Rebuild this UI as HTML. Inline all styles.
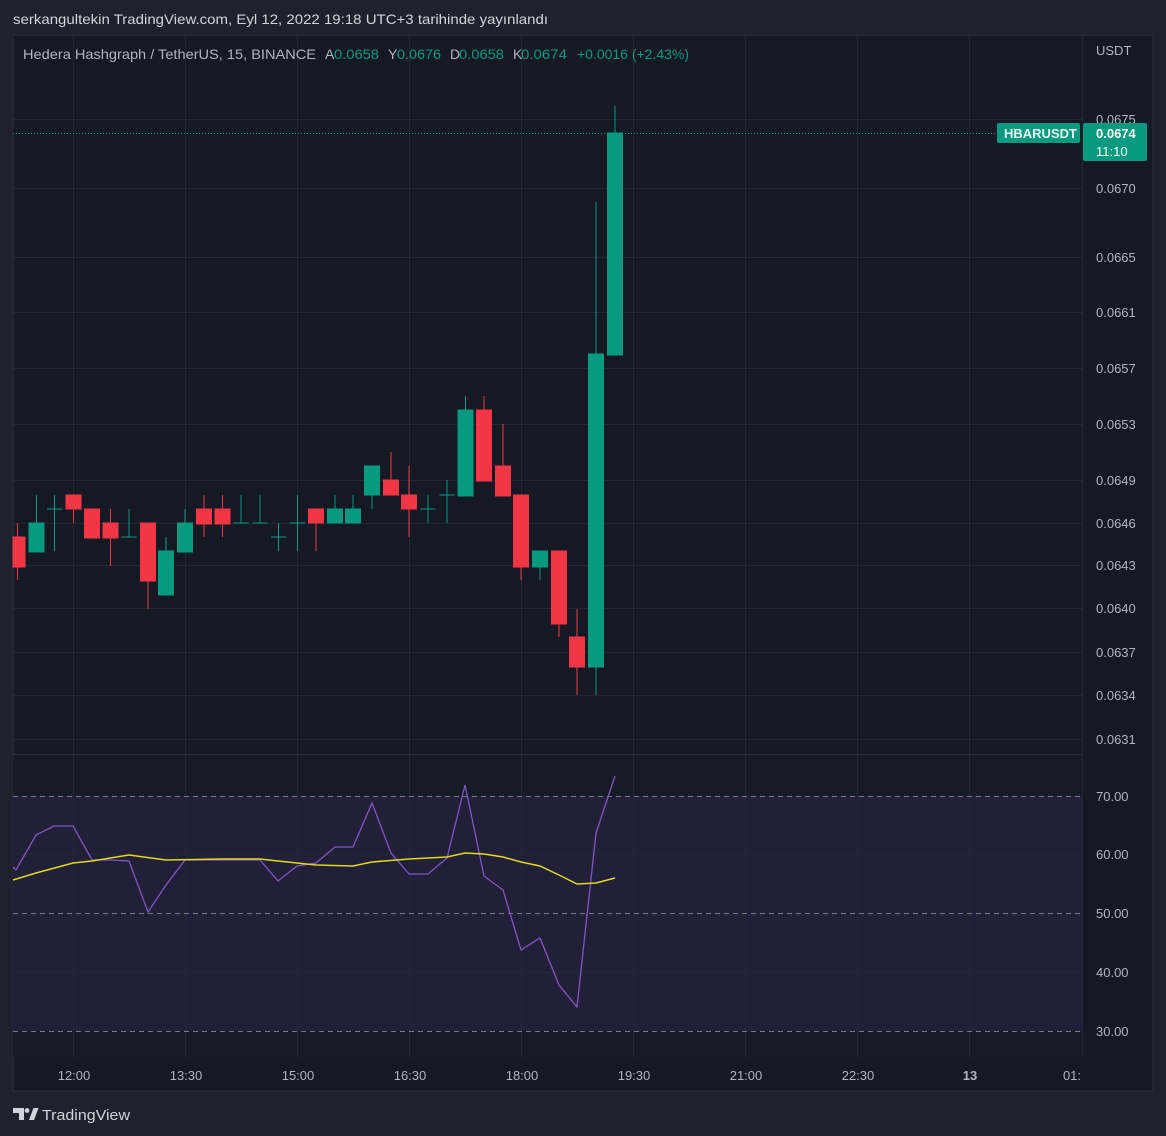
<!DOCTYPE html>
<html><head><meta charset="utf-8"><style>
html,body{margin:0;padding:0;background:#1e222d;width:1166px;height:1136px;overflow:hidden}
svg{display:block}
text{font-family:"Liberation Sans",sans-serif}
</style></head><body>
<svg width="1166" height="1136" viewBox="0 0 1166 1136" xmlns="http://www.w3.org/2000/svg">
<rect width="1166" height="1136" fill="#1f222d"/>
<text x="13" y="24" font-size="14" fill="#d1d4dc" textLength="535" lengthAdjust="spacingAndGlyphs">serkangultekin TradingView.com, Eyl 12, 2022 19:18 UTC+3 tarihinde yayınlandı</text>
<rect x="13" y="35" width="1140" height="1056" fill="#151924" stroke="#2a2e39" stroke-width="1"/>
<rect x="13" y="755" width="1070" height="302" fill="#171b26"/>
<rect x="13" y="796" width="1070" height="235" fill="#221f38"/>
<g stroke="#232733" stroke-width="1">
<line x1="13" x2="1083" y1="119.5" y2="119.5"/><line x1="13" x2="1083" y1="188.5" y2="188.5"/>
<line x1="13" x2="1083" y1="257.5" y2="257.5"/><line x1="13" x2="1083" y1="312.5" y2="312.5"/>
<line x1="13" x2="1083" y1="368.5" y2="368.5"/><line x1="13" x2="1083" y1="424.5" y2="424.5"/>
<line x1="13" x2="1083" y1="480.5" y2="480.5"/><line x1="13" x2="1083" y1="523.5" y2="523.5"/>
<line x1="13" x2="1083" y1="565.5" y2="565.5"/><line x1="13" x2="1083" y1="608.5" y2="608.5"/>
<line x1="13" x2="1083" y1="652.5" y2="652.5"/><line x1="13" x2="1083" y1="695.5" y2="695.5"/>
<line x1="13" x2="1083" y1="739.5" y2="739.5"/>
<line x1="13" x2="1083" y1="854.5" y2="854.5"/><line x1="13" x2="1083" y1="972.5" y2="972.5"/>
<line x1="73.5" x2="73.5" y1="35" y2="1057"/><line x1="185.5" x2="185.5" y1="35" y2="1057"/>
<line x1="297.5" x2="297.5" y1="35" y2="1057"/><line x1="409.5" x2="409.5" y1="35" y2="1057"/>
<line x1="521.5" x2="521.5" y1="35" y2="1057"/><line x1="633.5" x2="633.5" y1="35" y2="1057"/>
<line x1="745.5" x2="745.5" y1="35" y2="1057"/><line x1="857.5" x2="857.5" y1="35" y2="1057"/>
<line x1="969.5" x2="969.5" y1="35" y2="1057"/><line x1="1082.5" x2="1082.5" y1="35" y2="1057"/>
</g>
<line x1="13" x2="1083" y1="754.5" y2="754.5" stroke="#2a2e39"/>
<g stroke="#787b86" stroke-dasharray="5,4">
<line x1="13" x2="1083" y1="796.5" y2="796.5"/><line x1="13" x2="1083" y1="913.5" y2="913.5"/><line x1="13" x2="1083" y1="1031.5" y2="1031.5"/>
</g>
<g stroke-width="1">
<g fill="#f23645" stroke="#f23645">
<line x1="17.5" x2="17.5" y1="523" y2="580"/><rect x="13" y="537" width="12" height="30"/>
<line x1="73.5" x2="73.5" y1="495" y2="523"/><rect x="66" y="495" width="15" height="14"/>
<rect x="84.5" y="509" width="15" height="29"/>
<line x1="110.5" x2="110.5" y1="509" y2="566"/><rect x="103" y="523" width="15" height="15"/>
<line x1="148" x2="148" y1="523" y2="609"/><rect x="140.5" y="523" width="15" height="58"/>
<line x1="204" x2="204" y1="495" y2="537"/><rect x="196.5" y="509" width="15" height="15"/>
<line x1="222.5" x2="222.5" y1="495" y2="537"/><rect x="215" y="509" width="15" height="15"/>
<line x1="316" x2="316" y1="509" y2="551"/><rect x="308.5" y="509" width="15" height="14"/>
<line x1="391" x2="391" y1="452" y2="495"/><rect x="383.5" y="480" width="15" height="15"/>
<line x1="409" x2="409" y1="466" y2="537"/><rect x="401.5" y="495" width="15" height="14"/>
<line x1="484" x2="484" y1="396" y2="481"/><rect x="476.5" y="410" width="15" height="71"/>
<line x1="503" x2="503" y1="424" y2="496"/><rect x="495.5" y="466" width="15" height="30"/>
<line x1="521" x2="521" y1="495" y2="580"/><rect x="513.5" y="495" width="15" height="72"/>
<line x1="559" x2="559" y1="551" y2="637"/><rect x="551.5" y="551" width="15" height="73"/>
<line x1="577" x2="577" y1="609" y2="695"/><rect x="569.5" y="637" width="15" height="30"/>
</g>
<g fill="#089981" stroke="#089981">
<line x1="36.5" x2="36.5" y1="495" y2="552"/><rect x="29" y="523" width="15" height="29"/>
<line x1="54.5" x2="54.5" y1="495" y2="551"/><line x1="47" x2="62" y1="509" y2="509"/>
<line x1="129" x2="129" y1="509" y2="537"/><line x1="121.5" x2="136.5" y1="537" y2="537"/>
<line x1="166" x2="166" y1="537" y2="595"/><rect x="158.5" y="551" width="15" height="44"/>
<line x1="185" x2="185" y1="509" y2="552"/><rect x="177.5" y="523" width="15" height="29"/>
<line x1="241" x2="241" y1="495" y2="523"/><line x1="233.5" x2="248.5" y1="523" y2="523"/>
<line x1="260" x2="260" y1="495" y2="523"/><line x1="252.5" x2="267.5" y1="523" y2="523"/>
<line x1="278.5" x2="278.5" y1="523" y2="551"/><line x1="271" x2="286" y1="537" y2="537"/>
<line x1="297.5" x2="297.5" y1="495" y2="551"/><line x1="290" x2="305" y1="523" y2="523"/>
<line x1="335" x2="335" y1="495" y2="523"/><rect x="327.5" y="509" width="15" height="14"/>
<line x1="353" x2="353" y1="495" y2="523"/><rect x="345.5" y="509" width="15" height="14"/>
<line x1="372" x2="372" y1="466" y2="509"/><rect x="364.5" y="466" width="15" height="29"/>
<line x1="428" x2="428" y1="495" y2="523"/><line x1="420.5" x2="435.5" y1="509" y2="509"/>
<line x1="447" x2="447" y1="480" y2="523"/><line x1="439.5" x2="454.5" y1="495" y2="495"/>
<line x1="465.5" x2="465.5" y1="396" y2="496"/><rect x="458" y="410" width="15" height="86"/>
<line x1="540" x2="540" y1="551" y2="580"/><rect x="532.5" y="551" width="15" height="16"/>
<line x1="596" x2="596" y1="202" y2="695"/><rect x="588.5" y="354" width="15" height="313"/>
<line x1="615" x2="615" y1="106" y2="355"/><rect x="607.5" y="133" width="15" height="222"/>
</g>
</g>
<line x1="13" x2="997" y1="133.5" y2="133.5" stroke="#089981" stroke-dasharray="1,2"/>
<polyline fill="none" stroke="#7e57c2" stroke-width="1.3" points="13,867 16,870 36,835 54,826 73,826 92,860 110,860 129,861 148,912 166,885 185,860 204,860 222,860 241,860 260,860 278,881 297,866 316,863 335,847 353,847 372,803 391,853 409,874 428,874 447,858 465,785 484,876 503,890 521,950 540,938 559,985 577,1007 596,833 615,776"/>
<polyline fill="none" stroke="#e5d81d" stroke-width="1.5" points="13,880 36,873 73,863 92,861 129,855 166,860 222,859 260,859 278,861 316,865 353,866 372,862 409,859 447,857 465,853 484,854 503,857 521,862 540,866 559,875 577,884 596,883 615,878"/>
<g font-size="14" lengthAdjust="spacingAndGlyphs">
<text x="23" y="59" fill="#b2b5be" textLength="293" lengthAdjust="spacingAndGlyphs">Hedera Hashgraph / TetherUS, 15, BINANCE</text>
<text x="325" y="59" fill="#b2b5be">A</text><text x="334" y="59" fill="#089981" textLength="45" lengthAdjust="spacingAndGlyphs">0.0658</text>
<text x="388" y="59" fill="#b2b5be">Y</text><text x="397" y="59" fill="#089981" textLength="44" lengthAdjust="spacingAndGlyphs">0.0676</text>
<text x="450" y="59" fill="#b2b5be">D</text><text x="459" y="59" fill="#089981" textLength="45" lengthAdjust="spacingAndGlyphs">0.0658</text>
<text x="513" y="59" fill="#b2b5be">K</text><text x="521" y="59" fill="#089981" textLength="46" lengthAdjust="spacingAndGlyphs">0.0674</text>
<text x="577" y="59" fill="#089981" textLength="112" lengthAdjust="spacingAndGlyphs">+0.0016 (+2.43%)</text>
</g>
<g font-size="13" fill="#b2b5be">
<text x="1096" y="55">USDT</text>
<text x="1096" y="124">0.0675</text><text x="1096" y="193">0.0670</text><text x="1096" y="262">0.0665</text>
<text x="1096" y="317">0.0661</text><text x="1096" y="373">0.0657</text><text x="1096" y="429">0.0653</text>
<text x="1096" y="485">0.0649</text><text x="1096" y="528">0.0646</text><text x="1096" y="570">0.0643</text>
<text x="1096" y="613">0.0640</text><text x="1096" y="657">0.0637</text><text x="1096" y="700">0.0634</text>
<text x="1096" y="744">0.0631</text>
<text x="1096" y="801">70.00</text><text x="1096" y="859">60.00</text><text x="1096" y="918">50.00</text>
<text x="1096" y="977">40.00</text><text x="1096" y="1036">30.00</text>
</g>
<rect x="997" y="123" width="83" height="20" rx="2" fill="#089981"/>
<text x="1004" y="138" font-size="13" font-weight="bold" fill="#e8f5f2">HBARUSDT</text>
<rect x="1083" y="123" width="64" height="38" rx="2" fill="#089981"/>
<text x="1096" y="138" font-size="13" font-weight="bold" fill="#fff">0.0674</text>
<text x="1096" y="156" font-size="13" fill="#fff">11:10</text>
<g font-size="13" fill="#b2b5be" text-anchor="middle">
<text x="74" y="1080">12:00</text><text x="186" y="1080">13:30</text><text x="298" y="1080">15:00</text>
<text x="410" y="1080">16:30</text><text x="522" y="1080">18:00</text><text x="634" y="1080">19:30</text>
<text x="746" y="1080">21:00</text><text x="858" y="1080">22:30</text>
<text x="970" y="1080" font-weight="bold">13</text><text x="1072" y="1080">01:</text>
</g>
<g fill="#d1d4dc">
<path d="M13 1108h11v12h-5v-7h-6z"/><circle cx="27" cy="1110.5" r="2.4"/><path d="M29 1120l4.5-12h5l-4.5 12z"/>
</g>
<text x="42" y="1120" font-size="15" fill="#d1d4dc" textLength="88" lengthAdjust="spacingAndGlyphs">TradingView</text>
</svg>
</body></html>
